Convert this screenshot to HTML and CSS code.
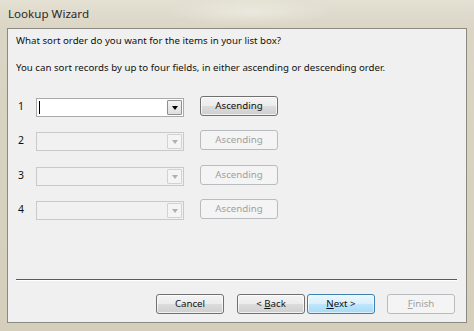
FILE: index.html
```html
<!DOCTYPE html>
<html>
<head>
<meta charset="utf-8">
<link rel="stylesheet" href="styles.css">
</head>
<body>
<div class="window">
  <div class="titlebar">Lookup Wizard</div>
  <div class="client">
    <p class="q">What sort order do you want for the items in your list box?</p>
    <p class="info">You can sort records by up to four fields, in either ascending or descending order.</p>
    <div class="rows">
      <div class="row r1">
        <span class="num">1</span>
        <div class="combo active"><span class="caret"></span><span class="drop"><span class="tri"></span></span></div>
        <button class="btn">Ascending</button>
      </div>
      <div class="row r2">
        <span class="num">2</span>
        <div class="combo disabled"><span class="drop"><span class="tri"></span></span></div>
        <button class="btn off">Ascending</button>
      </div>
      <div class="row r3">
        <span class="num">3</span>
        <div class="combo disabled"><span class="drop"><span class="tri"></span></span></div>
        <button class="btn off">Ascending</button>
      </div>
      <div class="row r4">
        <span class="num">4</span>
        <div class="combo disabled"><span class="drop"><span class="tri"></span></span></div>
        <button class="btn off">Ascending</button>
      </div>
    </div>
    <div class="sep"></div>
    <div class="footer">
      <button class="btn wide">Cancel</button>
      <button class="btn wide back">&lt; <u>B</u>ack</button>
      <button class="btn wide default"><u>N</u>ext &gt;</button>
      <button class="btn wide off finish"><u>F</u>inish</button>
    </div>
  </div>
</div>
</body>
</html>
```
FILE: styles.css
```css
* { box-sizing: border-box; }
html, body { margin: 0; padding: 0; }
body {
  width: 474px;
  height: 331px;
  overflow: hidden;
  font-family: "Noto Sans", "Open Sans", sans-serif;
}
.window {
  width: 474px;
  height: 331px;
  display: flex;
  flex-direction: column;
  background:
    radial-gradient(ellipse 120px 20px at 250px 12px, rgba(255,255,255,0.35), rgba(255,255,255,0) 70%),
    linear-gradient(to bottom, #e4e0d3 0px, #dad5c4 28px, #d4cebb 100%);
}
.titlebar {
  height: 28px;
  padding-left: 8px;
  padding-top: 5px;
  font-size: 11.6px;
  line-height: 18px;
  color: #2a2a2a;
}
.client {
  margin-left: 7px;
  width: 460px;
  height: 295px;
  background: #f0f0f0;
  border: 1px solid #8c8a80;
  display: flex;
  flex-direction: column;
  padding: 0 8px 0 8px;
  font-size: 9.7px;
  color: #111;
}
.q {
  margin: 4px 0 0 0;
  line-height: 15px;
}
.info {
  margin: 12px 0 0 0;
  line-height: 15px;
}
.rows {
  margin-top: 21px;
  display: flex;
  flex-direction: column;
}
.row {
  display: flex;
  align-items: center;
  height: 20px;
}
.r2 { margin-top: 14px; }
.r3 { margin-top: 15px; }
.r4 { margin-top: 14px; }
.num {
  width: 20px;
  padding-left: 2px;
  font-size: 10.5px;
}
.combo {
  position: relative;
  width: 148px;
  height: 19px;
  margin-top: 3px;
  border: 1px solid #aaaaaa;
  background: #ffffff;
  display: flex;
  justify-content: flex-end;
  align-items: stretch;
  padding: 1px;
}
.combo.disabled {
  background: #f1f1f1;
  border-color: #c9c9c9;
}
.caret {
  position: absolute;
  left: 2px;
  top: 2px;
  width: 1px;
  height: 13px;
  background: #000;
}
.drop {
  width: 15px;
  border: 1px solid #8f8f8f;
  border-radius: 1px;
  background: linear-gradient(to bottom, #f4f4f4, #dedede);
  display: flex;
  align-items: center;
  justify-content: center;
}
.combo.disabled .drop {
  border-color: #d2d2d2;
  background: #f4f4f4;
}
.tri {
  width: 0;
  height: 0;
  border-left: 3.5px solid transparent;
  border-right: 3.5px solid transparent;
  border-top: 4px solid #000;
  margin-top: 1px;
}
.combo.disabled .tri { border-top-color: #b0b0b0; }
.btn {
  font-family: "Noto Sans", "Open Sans", sans-serif;
  font-size: 9.7px;
  color: #111;
  height: 20px;
  width: 78px;
  margin-left: 16px;
  padding: 0;
  border: 1px solid #707070;
  border-radius: 3px;
  background: linear-gradient(to bottom, #f4f4f4 0%, #ececec 48%, #dcdcdc 52%, #cfcfcf 100%);
  box-shadow: inset 0 0 0 1px rgba(255,255,255,0.7);
  line-height: 16px;
}
.btn.off {
  color: #a0a0a0;
  border-color: #b8bcbf;
  background: #f4f4f4;
  box-shadow: none;
}
.btn u { text-decoration: underline; text-underline-offset: 1px; }
.sep {
  margin-top: auto;
  height: 2px;
  border-top: 1px solid #5a5a5a;
  border-bottom: 1px solid #ffffff;
  margin-bottom: 13px;
  margin-right: 1px;
}
.footer {
  display: flex;
  height: 20px;
  margin-bottom: 8px;
  padding-left: 140px;
}
.btn.wide { width: 68px; margin-left: 0; }
.btn.back { margin-left: 13px; }
.btn.default {
  margin-left: 2px;
  border-color: #3c7fb1;
  background: linear-gradient(to bottom, #eaf6fd 0%, #d9f0fc 48%, #bee6fd 52%, #a7d9f5 100%);
  box-shadow: inset 0 0 0 1px rgba(255,255,255,0.6);
}
.btn.finish { margin-left: 12px; }
```
